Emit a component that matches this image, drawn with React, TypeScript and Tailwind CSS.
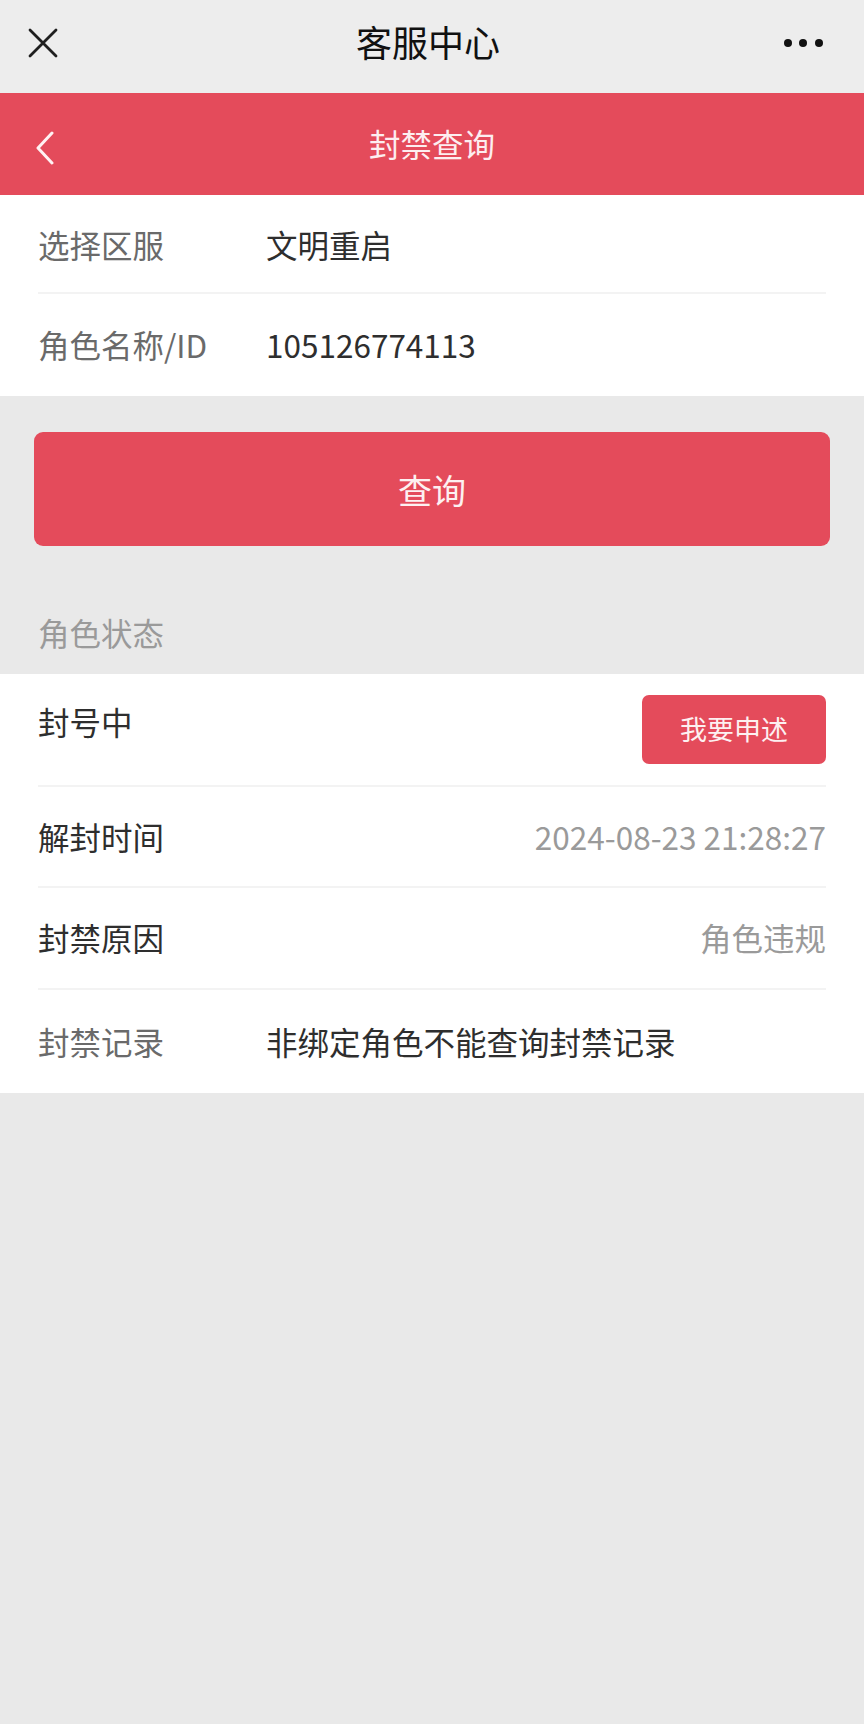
import { ReactNode } from "react";

const font = { fontFamily: '"Noto Sans CJK SC", "Noto Sans", sans-serif' };

function Row({ label, children, last, className = "" }: { label: ReactNode; children?: ReactNode; last?: boolean; className?: string }) {
  return (
    <div className={`flex items-center border-[#f3f3f3] ${last ? "" : "border-b-2"} ${className}`}>
      {label}
      {children}
    </div>
  );
}

export default function App() {
  return (
    <div className="min-h-[1724px] w-[864px] bg-[#e9e9e9]" style={font}>
      {/* wechat top bar */}
      <div className="flex h-[93px] items-center justify-between bg-[#ededed] pb-[8px] pl-[28px] pr-[41px]">
        <svg width="30" height="30" viewBox="0 0 30 30">
          <path d="M2 2 L28 28 M28 2 L2 28" stroke="#1f1f1f" strokeWidth="2.8" strokeLinecap="round" />
        </svg>
        <span className="mb-[4px] ml-[14px] text-[36px] text-[#111]">客服中心</span>
        <div className="flex gap-[7.5px]">
          <span className="h-[8px] w-[8px] rounded-full bg-[#111]" />
          <span className="h-[8px] w-[8px] rounded-full bg-[#111]" />
          <span className="h-[8px] w-[8px] rounded-full bg-[#111]" />
        </div>
      </div>

      {/* red header */}
      <div className="relative flex h-[102px] items-center justify-center bg-[#e44b5b]">
        <svg width="22" height="36" viewBox="0 0 22 36" className="absolute left-[34px] top-[38px]">
          <path d="M18 2 L4 17 L18 32" fill="none" stroke="#fff2f3" strokeWidth="3" strokeLinecap="round" strokeLinejoin="round" />
        </svg>
        <span className="text-[31.5px] text-[#fdeef0]">封禁查询</span>
      </div>

      {/* query form */}
      <div className="bg-white px-[38px]">
        <Row className="h-[99px] pt-[2px]" label={<span className="w-[228px] text-[31.5px] text-[#6a6a6a]">选择区服</span>}>
          <span className="text-[31.5px] text-[#2e2e2e]">文明重启</span>
        </Row>
        <Row last className="h-[102px]" label={<span className="w-[228px] text-[31.5px] text-[#6a6a6a]">角色名称/ID</span>}>
          <span className="text-[31.5px] text-[#2e2e2e]">105126774113</span>
        </Row>
      </div>

      <div className="px-[34px] pt-[36px]">
        <button type="button" className="flex h-[114px] w-full items-center justify-center rounded-[9px] bg-[#e44b5b] text-[34px] text-[#fdf0f1]">
          查询
        </button>
      </div>

      <div className="flex h-[128px] items-end px-[38px] pb-[18px] text-[31.5px] text-[#9a9a9a]">角色状态</div>

      {/* status */}
      <div className="bg-white px-[38px]">
        <Row className="h-[113px] justify-between" label={<span className="pb-[16px] text-[31.5px] text-[#2e2e2e]">封号中</span>}>
          <button type="button" className="h-[69px] w-[184px] rounded-[7px] bg-[#e44b5b] text-[27px] text-[#fdf0f1]">
            我要申述
          </button>
        </Row>
        <Row className="h-[101px] justify-between" label={<span className="text-[31.5px] text-[#2e2e2e]">解封时间</span>}>
          <span className="text-[31.5px] text-[#9a9a9a]">2024-08-23 21:28:27</span>
        </Row>
        <Row className="h-[102px] justify-between" label={<span className="text-[31.5px] text-[#2e2e2e]">封禁原因</span>}>
          <span className="text-[31.5px] text-[#9a9a9a]">角色违规</span>
        </Row>
        <Row last className="h-[103px]" label={<span className="w-[228px] text-[31.5px] text-[#6a6a6a]">封禁记录</span>}>
          <span className="text-[31.5px] text-[#2e2e2e]">非绑定角色不能查询封禁记录</span>
        </Row>
      </div>
    </div>
  );
}
